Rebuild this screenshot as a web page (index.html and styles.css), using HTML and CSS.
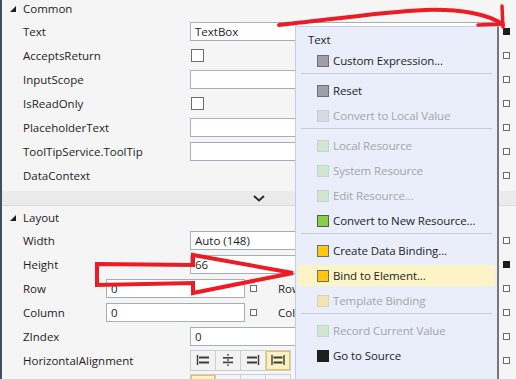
FILE: index.html
```html
<!DOCTYPE html>
<html lang="en">

<head>
    <meta charset="UTF-8">
    <meta name="viewport" content="width=device-width, initial-scale=1.0">
    <title>Properties</title>
    <link rel="stylesheet" href="styles.css">
</head>

<body>
    <div class="screen">
        <div class="panel">
            <div class="category first"><span class="expander"></span>Common</div>
            <div class="prop">
                <span class="label">Text</span>
                <div class="field">TextBox</div>
                <span class="marker set"></span>
            </div>
            <div class="prop">
                <span class="label">AcceptsReturn</span>
                <div><span class="check"></span></div>
                <span class="marker"></span>
            </div>
            <div class="prop">
                <span class="label">InputScope</span>
                <div class="field"></div>
                <span class="marker"></span>
            </div>
            <div class="prop">
                <span class="label">IsReadOnly</span>
                <div><span class="check"></span></div>
                <span class="marker"></span>
            </div>
            <div class="prop">
                <span class="label">PlaceholderText</span>
                <div class="field"></div>
                <span class="marker"></span>
            </div>
            <div class="prop">
                <span class="label">ToolTipService.ToolTip</span>
                <div class="field"></div>
                <span class="marker"></span>
            </div>
            <div class="prop">
                <span class="label">DataContext</span>
                <div></div>
                <span class="marker"></span>
            </div>

            <div class="band">
                <svg width="12" height="7" viewBox="0 0 12 7">
                    <polyline points="1,1 6,5.5 11,1" fill="none" stroke="#2b2b2b" stroke-width="2" />
                </svg>
            </div>

            <div class="category"><span class="expander"></span>Layout</div>
            <div class="prop">
                <span class="label">Width</span>
                <div class="field">Auto (148)</div>
                <span class="marker"></span>
            </div>
            <div class="prop">
                <span class="label">Height</span>
                <div class="field">66</div>
                <span class="marker set"></span>
            </div>
            <div class="prop split">
                <span class="label">Row</span>
                <div class="field">0</div>
                <div><span class="marker"></span></div>
                <span class="label">RowSpan</span>
                <div class="field"></div>
                <span class="marker"></span>
            </div>
            <div class="prop split">
                <span class="label">Column</span>
                <div class="field">0</div>
                <div><span class="marker"></span></div>
                <span class="label">ColumnSpan</span>
                <div class="field"></div>
                <span class="marker"></span>
            </div>
            <div class="prop">
                <span class="label">ZIndex</span>
                <div class="field">0</div>
                <span class="marker"></span>
            </div>
            <div class="prop">
                <span class="label">HorizontalAlignment</span>
                <div class="segmented">
                    <span class="seg">
                        <svg width="14" height="12" viewBox="0 0 14 12">
                            <path d="M1.5 1v10" stroke="#3c3c3c" stroke-width="1.4" />
                            <rect x="3" y="2.5" width="10" height="2" fill="#3c3c3c" />
                            <rect x="3" y="7.5" width="10" height="2" fill="#3c3c3c" />
                        </svg>
                    </span>
                    <span class="seg">
                        <svg width="14" height="12" viewBox="0 0 14 12">
                            <path d="M7 0v2M7 5v2M7 10v2" stroke="#3c3c3c" stroke-width="1.2" />
                            <rect x="2" y="3" width="10" height="1.6" fill="#3c3c3c" />
                            <rect x="2" y="7.6" width="10" height="1.6" fill="#3c3c3c" />
                        </svg>
                    </span>
                    <span class="seg">
                        <svg width="14" height="12" viewBox="0 0 14 12">
                            <path d="M12.5 1v10" stroke="#3c3c3c" stroke-width="1.4" />
                            <rect x="1" y="2.5" width="10" height="2" fill="#3c3c3c" />
                            <rect x="1" y="7.5" width="10" height="2" fill="#3c3c3c" />
                        </svg>
                    </span>
                    <span class="seg on">
                        <svg width="14" height="12" viewBox="0 0 14 12">
                            <path d="M1 1v10M13 1v10" stroke="#3c3c3c" stroke-width="1.4" />
                            <rect x="2.5" y="2.5" width="9" height="2" fill="#3c3c3c" />
                            <rect x="2.5" y="7.5" width="9" height="2" fill="#3c3c3c" />
                        </svg>
                    </span>
                </div>
                <span class="marker"></span>
            </div>
            <div class="prop">
                <span class="label"></span>
                <div class="segmented">
                    <span class="seg on"></span>
                    <span class="seg"></span>
                    <span class="seg"></span>
                    <span class="seg"></span>
                </div>
                <span class="marker"></span>
            </div>
        </div>

        <div class="menu">
            <div class="menu-title">Text</div>
            <div class="menu-item"><span class="swatch gray"></span>Custom Expression...</div>
            <div class="menu-sep"></div>
            <div class="menu-item"><span class="swatch gray"></span>Reset</div>
            <div class="menu-item off"><span class="swatch gray"></span>Convert to Local Value</div>
            <div class="menu-sep"></div>
            <div class="menu-item off"><span class="swatch green"></span>Local Resource</div>
            <div class="menu-item off"><span class="swatch green"></span>System Resource</div>
            <div class="menu-item off"><span class="swatch green"></span>Edit Resource...</div>
            <div class="menu-item"><span class="swatch green"></span>Convert to New Resource...</div>
            <div class="menu-sep"></div>
            <div class="menu-item"><span class="swatch yellow"></span>Create Data Binding...</div>
            <div class="menu-item hot"><span class="swatch yellow"></span>Bind to Element...</div>
            <div class="menu-item off"><span class="swatch yellow"></span>Template Binding</div>
            <div class="menu-sep"></div>
            <div class="menu-item off"><span class="swatch green"></span>Record Current Value</div>
            <div class="menu-item"><span class="swatch dark"></span>Go to Source</div>
        </div>

        <svg class="marks" width="516" height="379" viewBox="0 0 516 379">
            <g fill="none" stroke="#ec1c24" stroke-linecap="round" stroke-linejoin="round">
                <path d="M279 25 C 320 21, 380 12, 425 10 C 460 9, 490 14, 503 25" stroke-width="4" />
                <path d="M478 25 L503 24" stroke-width="3.5" />
                <path d="M502 6 L503 27" stroke-width="3.5" />
                <polygon points="97,264 193,265 193,255 293,273 193,293 193,283 97,285" stroke-width="4" stroke-linejoin="miter" />
            </g>
        </svg>
    </div>
</body>
</html>
```

FILE: styles.css
```css
body {
    margin: 0;
    font-family: "Open Sans", sans-serif;
    font-size: 11.5px;
    color: #1e1e1e;
}

.screen {
    position: relative;
    width: 516px;
    height: 379px;
    overflow: hidden;
}

.panel {
    height: 100%;
    box-sizing: border-box;
    background: #f5f5f5;
    border-left: 2px solid #434f61;
}

.category {
    display: flex;
    align-items: center;
    height: 22px;
}

.category.first {
    height: 16px;
    margin-bottom: 3px;
}

.expander {
    width: 0;
    height: 0;
    border-left: 6px solid transparent;
    border-bottom: 6px solid #1e1e1e;
    margin: 2px 7px 0 8px;
}

.prop {
    display: grid;
    grid-template-columns: 167px 1fr 18px;
    align-items: center;
    height: 24px;
    padding-left: 21px;
    white-space: nowrap;
}

.prop.split {
    grid-template-columns: 83px 139px 33px 80px 1fr 18px;
}

.field {
    height: 19px;
    box-sizing: border-box;
    border: 1px solid #a7adb9;
    background: #fff;
    padding-left: 4px;
    line-height: 17px;
    margin-right: 5px;
    overflow: hidden;
}

.split .field {
    margin-right: 0;
}

.split .field:nth-of-type(2) {
    margin-right: 5px;
}

.check {
    display: block;
    width: 13px;
    height: 13px;
    box-sizing: border-box;
    border: 1px solid #6d6d6d;
    background: #fff;
    margin-left: 1px;
}

.marker {
    display: block;
    width: 7px;
    height: 7px;
    box-sizing: border-box;
    border: 1px solid #6b6b6b;
    background: #fff;
    margin-left: 5px;
}

.marker.set {
    background: #1e1e1e;
    border-color: #1e1e1e;
}

.band {
    margin-top: 4px;
    height: 14px;
    background: #ebebeb;
    border-bottom: 1px solid #dadada;
    display: flex;
    align-items: center;
    justify-content: center;
}

.segmented {
    display: flex;
    width: max-content;
    height: 21px;
    box-sizing: border-box;
    border: 1px solid #cbced5;
}

.seg {
    display: flex;
    align-items: center;
    justify-content: center;
    width: 24px;
    background: #f3f3f3;
    border-right: 1px solid #cbced5;
}

.seg:last-child {
    border-right: none;
}

.seg.on {
    background: #fdf1c2;
    box-shadow: inset 0 0 0 1px #e1c163;
}

/* context menu */
.menu {
    position: absolute;
    left: 295px;
    top: 26px;
    width: 204px;
    height: 370px;
    box-sizing: border-box;
    background: #e9eefa;
    border: 1px solid #c6cddc;
    border-right: 2px solid #767676;
    padding-top: 4px;
    display: flex;
    flex-direction: column;
    white-space: nowrap;
    letter-spacing: -0.1px;
}

.menu > * {
    flex: none;
}

.menu-title {
    height: 17px;
    line-height: 17px;
    padding-left: 12px;
}

.menu-item {
    display: flex;
    align-items: center;
    height: 21px;
    margin: 2px;
    padding-left: 19px;
}

.menu-item.hot {
    background: #fcf3c6;
}

.menu-item.off {
    color: #a3a5aa;
}

.menu-sep {
    height: 1px;
    background: #c6cbd8;
    margin: 0 5px 4px;
}

.swatch {
    width: 12px;
    height: 12px;
    box-sizing: border-box;
    border: 1px solid #6e6f78;
    margin-right: 4px;
}

.swatch.gray {
    background: #9d9fa9;
}

.swatch.green {
    background: #86cf4c;
    border-color: #5b5b5b;
}

.swatch.yellow {
    background: #ffc80a;
    border-color: #6f6f6f;
}

.swatch.dark {
    background: #1f1f1f;
    border-color: #1f1f1f;
}

.off .swatch.gray {
    background: #d6dae5;
    border-color: #c8ccd8;
}

.off .swatch.green {
    background: #d0e6d2;
    border-color: #c2d8c6;
}

.off .swatch.yellow {
    background: #f1e5b5;
    border-color: #ddd3ae;
}

.marks {
    position: absolute;
    left: 0;
    top: 0;
    pointer-events: none;
}
```
